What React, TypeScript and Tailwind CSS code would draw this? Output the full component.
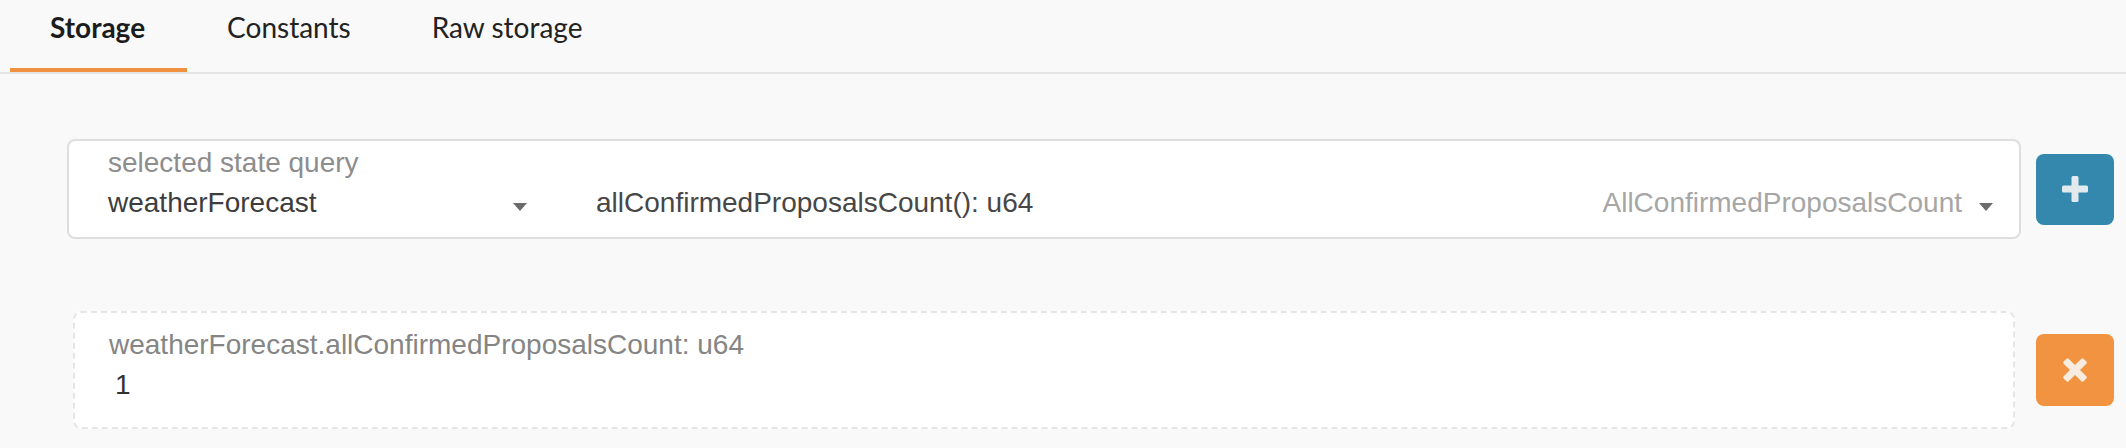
const tabs = [
  { label: 'Storage', active: true, pad: 'pl-[40px] pr-[42px]' },
  { label: 'Constants', active: false, pad: 'pl-[40px] pr-[41px]' },
  { label: 'Raw storage', active: false, pad: 'px-[40px]' }
]

function Caret() {
  return (
    <svg width="14" height="8" viewBox="0 0 14 8" className="mt-[7px] shrink-0">
      <path d="M0 0 L14 0 L7 8 Z" fill="#6b6b6b" />
    </svg>
  )
}

function PlusIcon() {
  return (
    <svg width="26" height="26" viewBox="0 0 26 26">
      <rect x="9.5" y="0" width="7" height="26" rx="1.5" fill="#e3eaee" />
      <rect x="0" y="9.5" width="26" height="7" rx="1.5" fill="#e3eaee" />
    </svg>
  )
}

function CloseIcon() {
  return (
    <svg width="24" height="24" viewBox="0 0 24 24">
      <g transform="rotate(45 12 12)">
        <rect x="8.5" y="-2" width="7" height="28" rx="1.5" fill="#f8ece1" />
        <rect x="-2" y="8.5" width="28" height="7" rx="1.5" fill="#f8ece1" />
      </g>
    </svg>
  )
}

export default function App() {
  return (
    <div className="h-[448px] w-full overflow-hidden bg-[#f9f9f9] font-['Liberation_Sans',Arial,sans-serif]">
      <nav className="flex border-b-2 border-[#e4e4e4] pl-[10px] font-['Lato',sans-serif]">
        {tabs.map(tab => (
          <div
            key={tab.label}
            className={`${tab.pad} ${
              tab.active
                ? 'border-b-4 border-[#f0913f] pt-[13px] pb-[27px] text-[28px] leading-[28px] font-bold text-[#1b1c1d]'
                : 'border-b-4 border-transparent pt-[13px] pb-[27px] text-[28px] leading-[28px] text-[#222222]'
            }`}
          >
            {tab.label}
          </div>
        ))}
      </nav>

      <div className="mt-[65px] flex items-center gap-[15px] pl-[67px] pr-[12px]">
        <div className="flex h-[100px] flex-1 items-end rounded-[8px] border-2 border-[#dedede] bg-white pb-[14px] text-[28px] leading-[40px]">
          <div className="flex w-[486px] flex-col pl-[39px] pr-[28px]">
            <span className="text-[#8d8d8d]">selected state query</span>
            <div className="flex items-center justify-between text-[#3d3d3d]">
              <span>weatherForecast</span>
              <Caret />
            </div>
          </div>
          <div className="flex flex-1 items-center pl-[41px] pr-[26px]">
            <span className="text-[#474747]">allConfirmedProposalsCount(): u64</span>
            <span className="ml-auto mr-[17px] text-[#a6a6a6]">AllConfirmedProposalsCount</span>
            <Caret />
          </div>
        </div>
        <button className="flex h-[71px] w-[78px] items-center justify-center rounded-[8px] bg-[#3488ad]">
          <PlusIcon />
        </button>
      </div>

      <div className="mt-[72px] flex items-center gap-[21px] pl-[73px] pr-[12px]">
        <div className="flex h-[118px] flex-1 flex-col rounded-[8px] border-2 border-dashed border-[#e6e6e6] bg-white pl-[34px] pt-[12px] text-[28px] leading-[40px]">
          <span className="text-[#858585]">weatherForecast.allConfirmedProposalsCount: u64</span>
          <span className="ml-[6px] text-[#333333]">1</span>
        </div>
        <button className="flex h-[72px] w-[78px] items-center justify-center rounded-[8px] bg-[#f19341]">
          <CloseIcon />
        </button>
      </div>
    </div>
  )
}
